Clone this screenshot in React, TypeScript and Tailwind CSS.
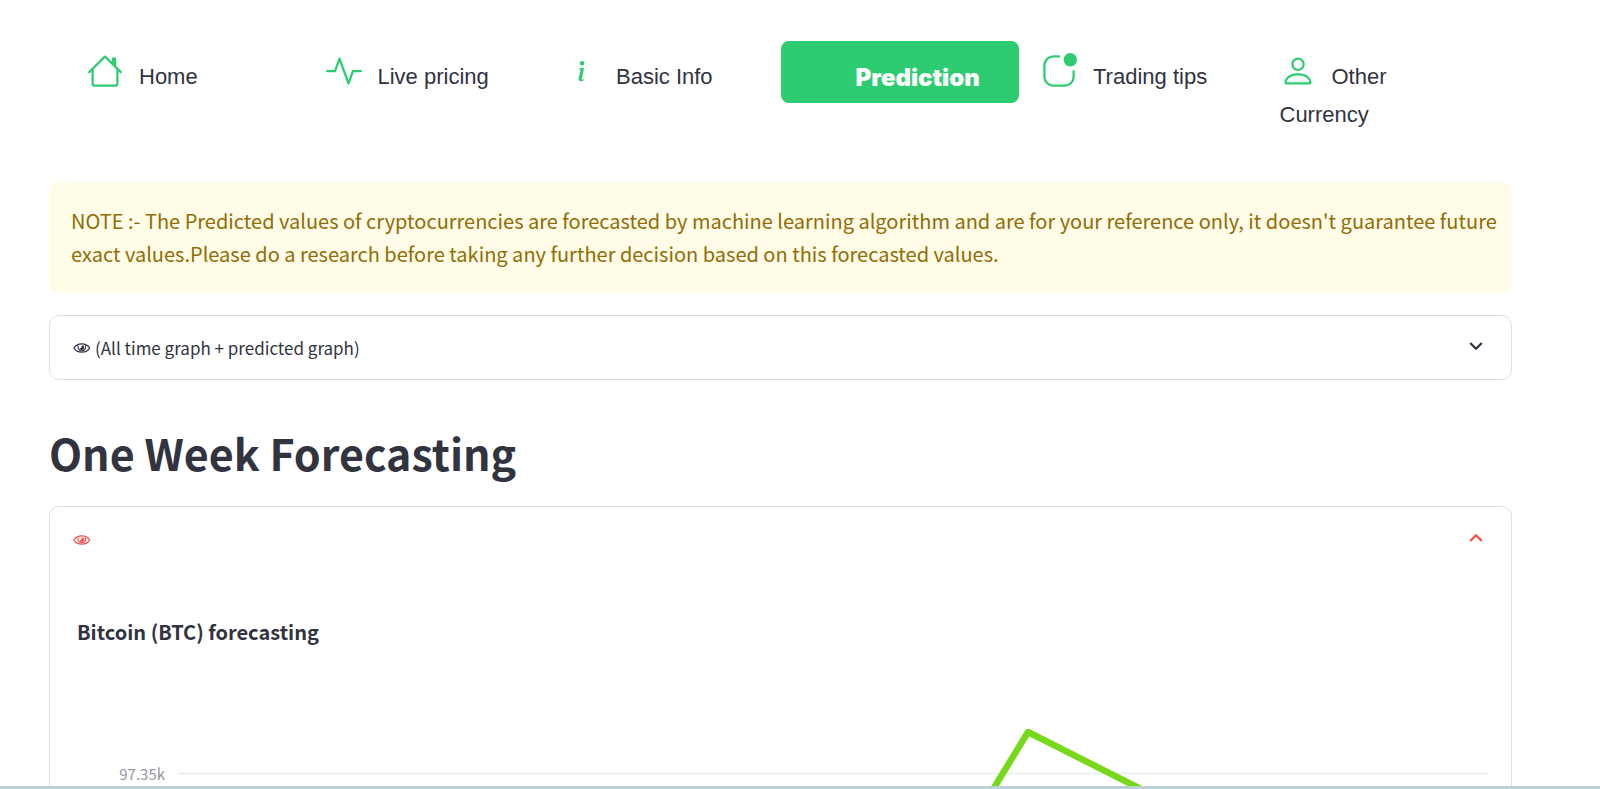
import type { ReactNode } from "react";
import { BsActivity, BsAppIndicator, BsInfo, BsPerson } from "react-icons/bs";

function HouseIcon({ className }: { className?: string }) {
  return (
    <svg viewBox="0 0 16 16" fill="currentColor" className={className} aria-hidden="true">
      <path
        fillRule="evenodd"
        d="M2 13.5V7h1v6.5a.5.5 0 0 0 .5.5h9a.5.5 0 0 0 .5-.5V7h1v6.5a1.5 1.5 0 0 1-1.5 1.5h-9A1.5 1.5 0 0 1 2 13.5zm11-11V6l-2-2V2.5a.5.5 0 0 1 .5-.5h1a.5.5 0 0 1 .5.5z"
      />
      <path
        fillRule="evenodd"
        d="M7.293 1.5a1 1 0 0 1 1.414 0l6.647 6.646a.5.5 0 0 1-.708.708L8 2.207 1.354 8.854a.5.5 0 1 1-.708-.708L7.293 1.5z"
      />
    </svg>
  );
}

function EyeIcon() {
  return (
    <svg viewBox="0 0 18 12" className="h-3 w-[18px] shrink-0" fill="none" stroke="currentColor" aria-hidden="true">
      <path d="M1 6C2.600 3 5.400 1.800 8.800 1.800S15 3 16.600 6C15 9 12.200 10.200 8.800 10.200S2.600 9 1 6Z" strokeWidth="1.300" />
      <path d="M5 3.400C4.600 6.800 6.200 8.800 8.800 8.800s4.200-2 3.800-5.400" strokeWidth="1.100" />
      <path d="M8.800 3.200a2.400 2.400 0 1 1-2.300 3l1.900-.4Z" fill="currentColor" stroke="none" />
    </svg>
  );
}

function Chevron({ up = false }: { up?: boolean }) {
  return (
    <svg viewBox="0 0 14 14" className="size-[14px] shrink-0" fill="none" stroke="currentColor" strokeWidth="2.300" strokeLinejoin="round" aria-hidden="true">
      <path d={up ? "M1.200 8 7 2.200 12.800 8" : "M1.200 2 7 7.800 12.800 2"} />
    </svg>
  );
}

const iconClass = "inline-block size-9 align-[-5px] text-[#2ecc71]";

const tabs: { label: string; icon: ReactNode; active?: boolean }[] = [
  { label: "Home", icon: <HouseIcon className={iconClass} /> },
  { label: "Live pricing", icon: <BsActivity className={iconClass} /> },
  { label: "Basic Info", icon: <BsInfo className={iconClass} /> },
  { label: "Prediction", icon: <span className="inline-block w-9" />, active: true },
  { label: "Trading tips", icon: <BsAppIndicator className={iconClass} /> },
  { label: "Other Currency", icon: <BsPerson className={iconClass} /> },
];

function NavTabs() {
  return (
    <nav className="px-4 font-['Liberation_Sans',sans-serif] text-[22px] leading-[38px]">
      <ul className="grid grid-cols-6 items-start">
        {tabs.map((tab) => (
          <li key={tab.label}>
            <a
              href="#"
              aria-current={tab.active ? "page" : undefined}
              className={
                tab.active
                  ? "block rounded-lg bg-[#2ecc71] px-[23px] pt-[18px] pb-[6px] font-['Inter',sans-serif] text-[24px] leading-[38px] font-black text-white"
                  : "block rounded-lg px-[22px] pt-[12px] pb-[6px]"
              }
            >
              {tab.icon}
              <span className="pl-4">{tab.label}</span>
            </a>
          </li>
        ))}
      </ul>
    </nav>
  );
}

function ForecastChart() {
  return (
    <svg viewBox="0 0 1461 300" className="block w-full" role="img" aria-label="Bitcoin forecast">
      <text x="115" y="131" textAnchor="end" fill="#9495a1" className="font-['Noto_Sans_CJK_SC',sans-serif] text-[15px]">
        97.35k
      </text>
      <path d="M128 124.500H1439" stroke="#e6eeee" strokeWidth="1.500" />
      <path d="M911 193 978 83 1176 183" fill="none" stroke="#76d919" strokeWidth="6.500" strokeLinejoin="round" />
    </svg>
  );
}

export default function App() {
  return (
    <div className="flex h-screen flex-col bg-white font-['Noto_Sans_CJK_SC',sans-serif] text-[#31333f]">
      <main className="min-h-0 flex-1 overflow-hidden pt-[41px] pr-[88px] pl-[49px]">
        <NavTabs />

        <p className="mt-[42px] rounded-[10px] bg-[#fffce7] pt-[22px] pr-[14px] pb-[23px] pl-[22px] text-[20px] leading-[33px] text-[#926c05]">
          NOTE :- The Predicted values of cryptocurrencies are forecasted by machine learning algorithm and are for your
          reference only, it doesn't guarantee future exact values.Please do a research before taking any further
          decision based on this forecasted values.
        </p>

        <button
          type="button"
          aria-expanded="false"
          className="mt-[22px] flex h-[65px] w-full items-center rounded-[10px] border border-[#dedfe2] pr-[28px] pl-[23px] text-[17px]"
        >
          <EyeIcon />
          <span className="flex-1 pl-1 text-left">(All time graph + predicted graph)</span>
          <Chevron />
        </button>

        <h1 className="mt-[44px] text-[43px] leading-[56px] font-semibold">One Week Forecasting</h1>

        <section className="mt-[26px] rounded-[10px] border border-[#dedfe2]">
          <button
            type="button"
            aria-expanded="true"
            aria-label="Weekly forecast"
            className="flex h-[65px] w-full items-center justify-between pr-[28px] pl-[23px] text-[#ff4b4b]"
          >
            <EyeIcon />
            <Chevron up />
          </button>
          <h2 className="mt-[43px] pl-[27px] text-[20px] leading-[34px] font-bold">Bitcoin (BTC) forecasting</h2>
          <ForecastChart />
        </section>
      </main>
      <div className="h-[3px] shrink-0 bg-[#b9d2d6]" />
    </div>
  );
}
